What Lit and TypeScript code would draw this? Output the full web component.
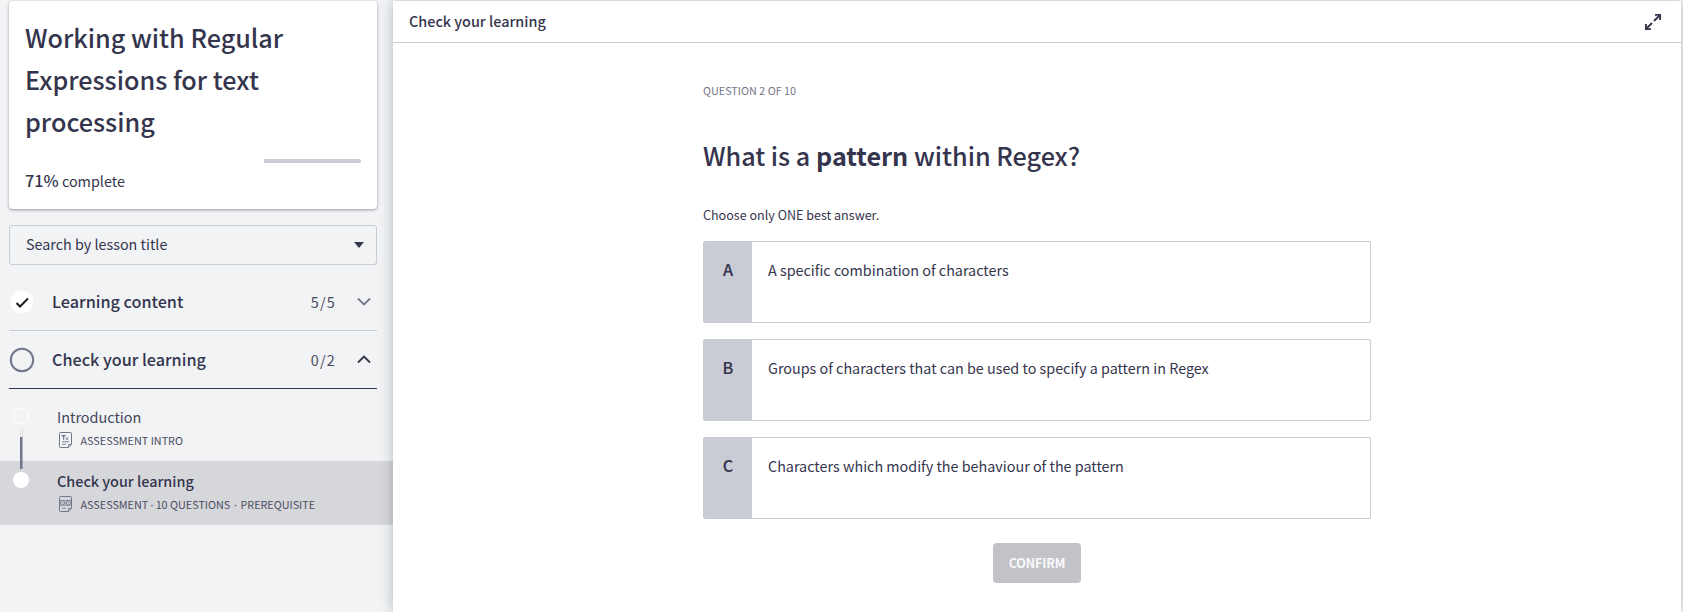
import { LitElement, html, css, svg } from "lit";
import { customElement, state } from "lit/decorators.js";

const OPTIONS = [
  { letter: "A", text: "A specific combination of characters" },
  { letter: "B", text: "Groups of characters that can be used to specify a pattern in Regex" },
  { letter: "C", text: "Characters which modify the behaviour of the pattern" },
];

const page = svg`
  <path d="M1.5 .5h10a1 1 0 0 1 1 1v11l-3 3h-8a1 1 0 0 1-1-1v-13a1 1 0 0 1 1-1z"/>
  <path d="M9.5 15.3v-2.8h2.8" stroke-width=".9"/>`;
const introIcon = svg`${page}
  <path d="M2.5 3.7h4.2M4.6 3.7v4.1" stroke-width="1.2"/>
  <path d="M6.6 5.4l2.8 2.4M9.4 5.4L6.6 7.8M3 9.8h7M3 12.2h4" stroke-width=".9"/>`;
const quizIcon = svg`${page}
  <g stroke-width=".8"><circle cx="3.6" cy="6.9" r="2.2"/><circle cx="9.4" cy="6.9" r="2.2"/>
  <path d="M1 4.6h11M1 9.2h11M5.8 6.9h1.4M2.6 7.3l1-.8 1 .8M8.4 6.5l1 .8 1-.8M3 12.2h4"/></g>`;

@customElement("app-root")
export class AppRoot extends LitElement {
  @state() progress = 71;

  static styles = css`
    :host { display: block; height: 612px; overflow: hidden; background: #f1f3f5; color: #34354d;
      font-family: "Noto Sans CJK SC", "Noto Sans", sans-serif; }
    * { box-sizing: border-box; }
    .page { display: grid; grid-template-columns: 393px 1288px; height: 612px; }
    .side { padding: 1px 0 0; overflow: hidden; white-space: nowrap; }
    .card { margin: 0 16px 0 9px; height: 208px; padding: 15px 16px 0 16px; background: #fff; border-radius: 4px;
      box-shadow: 0 1px 3px rgba(40, 42, 60, .45); }
    .title { margin: 0; font-size: 25.2px; line-height: 42px; font-weight: 500; }
    .bar { margin-top: 17px; height: 4px; display: flex; background: #c9cbd5; border-radius: 0 2px 2px 0; }
    .fill { background: #fff; }
    .done { margin-top: 5px; font-size: 14.4px; line-height: 24px; }
    .done b { font-size: 16.2px; font-weight: 500; }
    .search { margin: 16px 16px 0 9px; height: 40px; border: 1px solid #c9cbd5; border-radius: 3px; padding: 0 12px 0 16px;
      display: flex; align-items: center; justify-content: space-between; font-size: 14.35px; line-height: 24px; }
    .search span { padding-bottom: 2px; }
    .section { margin: 0 16px 0 9px; height: 58px; border-bottom: 1px solid #c9cbd5; display: flex; align-items: center; }
    .section.first { margin-top: 8px; }
    .section.open { border-color: #34354d; }
    .name { flex: 1; margin-left: 17px; font-size: 16.2px; font-weight: 500; line-height: 26px; padding-bottom: 2px; }
    .count { font-size: 14.4px; line-height: 24px; letter-spacing: 1.2px; margin-right: 21px; color: #4b4c62; }
    .chev { margin-right: 6px; }
    .lessons { padding-top: 8px; }
    .lesson { height: 64px; display: grid; grid-template-columns: 57px 1fr; }
    .lesson.active { background: #d6d7db; }
    .mark { overflow: visible; }
    .lname { margin-top: 8px; font-size: 14.4px; line-height: 24px; color: #44455b; }
    .active .lname { font-weight: 500; color: #34354d; }
    .meta { display: flex; align-items: center; gap: 8px; height: 20px; margin: 1px 0 0 1.5px; font-size: 10.8px; line-height: 18px; color: #4b4c62; }
    .dot { display: inline-block; width: 3px; text-align: center; margin: 0 2.2px; font-family: "Noto Sans", sans-serif; font-size: 11px; }
    .dot.wide { margin: 0 3.6px; }
    .main { background: #fff; margin-top: 1px; height: 611px; box-shadow: 0 0 12px rgba(30, 32, 45, .28); }
    .head { height: 42px; border-bottom: 1px solid #c9cbd5; display: flex; align-items: center; justify-content: space-between;
      padding: 0 19px 0 16px; font-size: 14.4px; font-weight: 500; line-height: 24px; }
    .head span { padding-bottom: 2px; }
    .quiz { width: 668px; margin-left: 310px; padding-top: 38px; display: flex; flex-direction: column; }
    .step { font-size: 10.8px; line-height: 18px; color: #74758a; }
    .question { margin: 35px 0 0; font-size: 25.2px; line-height: 42px; font-weight: 500; }
    .question b { font-weight: 700; }
    .hint { margin-top: 29px; font-size: 12.55px; line-height: 20px; }
    .options { margin-top: 16px; display: grid; gap: 16px; }
    .option { height: 82px; display: grid; grid-template-columns: 48px 1fr; border: 1px solid #c9cbd5; border-radius: 2px;
      font-size: 14.35px; line-height: 24px; }
    .letter { background: #c9cbd5; text-align: center; padding-top: 15px; font-size: 16.2px; font-weight: 500;
      -webkit-text-stroke: .15px #34354d; }
    .answer { padding: 16px; }
    .confirm { align-self: center; margin-top: 24px; width: 88px; height: 40px; border: 0; border-radius: 4px; background: #c2c3c9;
      color: #fafafb; font: 700 12.5px/24px "Noto Sans CJK SC", sans-serif; letter-spacing: -.1px; padding: 0; }
    svg { display: block; flex: none; }
    .line { fill: none; stroke: #74758a; }
  `;

  render() {
    return html`<div class="page">
      <aside class="side">
        <div class="card">
          <h1 class="title">Working with Regular<br>Expressions for text<br>processing</h1>
          <div class="bar"><div class="fill" style="width:${this.progress}%"></div></div>
          <div class="done"><b>${this.progress}%</b> complete</div>
        </div>
        <div class="search"><span>Search by lesson title</span>
          <svg width="10" height="6"><path d="M0 0h10L5 6z" fill="#34354d"/></svg></div>
        <div class="section first">
          <svg width="26" height="26"><circle cx="13" cy="13" r="12" fill="#fff" stroke="#e8eaed" stroke-width=".5"/>
            <path d="M7.5 14l3.5 3.5 8-8" fill="none" stroke="#1c1d24" stroke-width="2"/></svg>
          <span class="name">Learning content</span><span class="count">5/5</span>
          <svg class="chev" width="14" height="9"><path d="M1 1.5l6 6 6-6" fill="none" stroke="#74758a" stroke-width="1.8"/></svg>
        </div>
        <div class="section open">
          <svg width="26" height="26"><circle cx="13" cy="13" r="11.2" fill="none" stroke="#74758a" stroke-width="2"/></svg>
          <span class="name">Check your learning</span><span class="count">0/2</span>
          <svg class="chev" width="14" height="9"><path d="M1 7.5l6-6 6 6" fill="none" stroke="#34354d" stroke-width="1.8"/></svg>
        </div>
        <div class="lessons">
          <div class="lesson">
            <svg class="mark" width="57" height="64"><circle cx="21" cy="19" r="7.5" fill="none" stroke="#fff"/></svg>
            <div><div class="lname">Introduction</div>
              <div class="meta"><svg class="line" width="14" height="16">${introIcon}</svg><span>ASSESSMENT INTRO</span></div></div>
          </div>
          <div class="lesson active">
            <svg class="mark" width="57" height="64">
              <path d="M20.5 -32v8M22.5 -32v8" stroke="#d6d7db" stroke-width=".8"/><path d="M21 -32h1v8h-1z" fill="#fff"/>
              <path d="M20 -24h2.5v32h-2.5z" fill="#74758a"/><circle cx="21" cy="19" r="8" fill="#fff"/></svg>
            <div><div class="lname">Check your learning</div>
              <div class="meta"><svg class="line" width="14" height="16">${quizIcon}</svg><span>ASSESSMENT<span class="dot">·</span>10 QUESTIONS<span class="dot wide">·</span>PREREQUISITE</span></div></div>
          </div>
        </div>
      </aside>
      <main class="main">
        <header class="head"><span>Check your learning</span>
          <svg width="18" height="18"><path d="M10 8l5.5-5.5M8 10l-5.5 5.5" stroke="#34354d" stroke-width="1.8"/><path d="M11 1.9h5.1v5.1M1.9 11v5.1h5.1" fill="none" stroke="#34354d" stroke-width="1.9"/></svg>
        </header>
        <section class="quiz">
          <div class="step">QUESTION 2 OF 10</div>
          <h2 class="question">What is a <b>pattern</b> within Regex?</h2>
          <div class="hint">Choose only ONE best answer.</div>
          <div class="options">${OPTIONS.map(o => html`<div class="option"><div class="letter">${o.letter}</div><div class="answer">${o.text}</div></div>`)}</div>
          <button class="confirm">CONFIRM</button>
        </section>
      </main>
    </div>`;
  }
}
